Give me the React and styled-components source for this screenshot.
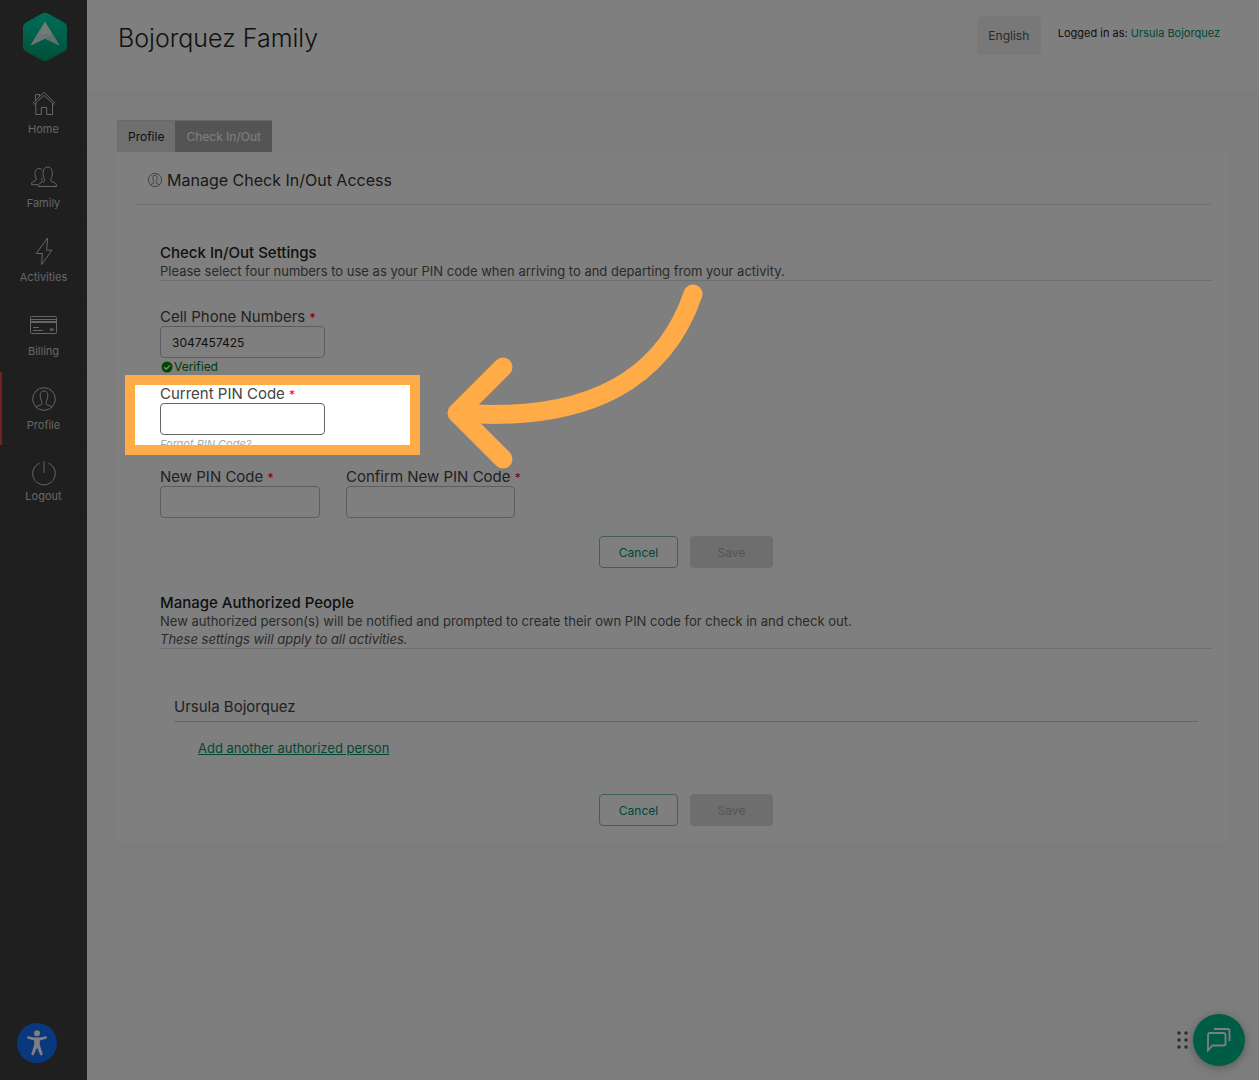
import React, { useState } from "react";
import styled, { createGlobalStyle } from "styled-components";

const HomeIcon = () => (
  <Icon width="24" height="24" viewBox="0 0 24 24">
    <path d="M3.5 10V3.5H7.5V6" />
    <path d="M0.8 12.4L12 1.2L23.2 12.4" />
    <path d="M1.8 13.6L12 4.4L22.2 13.6" />
    <path d="M3.8 12V23.5H9.3V16.5H14.7V23.5H20.5V12" />
  </Icon>
);

const FamilyIcon = () => (
  <Icon width="26" height="22" viewBox="0 0 26 22">
    <path d="M7.5 20.5C7.5 17 9.5 16.8 13 15.6C14.2 14.6 13.6 13 12.9 11.5C11.4 8.5 11.4 1 16.7 1C22 1 22 8.5 20.5 11.5C19.8 13 19.2 14.6 20.4 15.6C24 16.8 25.5 17 25.5 20.5Z" />
    <path d="M7 18.7H0.5C0.5 15.8 2 15.6 4.6 14.6C5.6 13.8 5.2 12.6 4.7 11.2C3.5 8.5 3.6 2.6 8 2.6C9.6 2.6 10.6 3.2 11.4 4.2" />
    <path d="M11.2 11.5C10.6 12.8 10.2 14 11.3 15" />
  </Icon>
);

const ActivitiesIcon = () => (
  <Icon width="18" height="28" viewBox="0 0 18 28">
    <path d="M12.6 1L1.3 16.5H7.4L6.6 27.5L17 13.2H11.6Z" />
  </Icon>
);

const BillingIcon = () => (
  <Icon width="27" height="18" viewBox="0 0 27 18">
    <rect x="0.5" y="0.5" width="26" height="17" rx="1" />
    <path d="M1 3.5H26M1 5.5H26M1 6.5H26M3 11.5H9M3 14.5H13" />
    <rect x="20.5" y="13" width="2.5" height="1.2" />
  </Icon>
);

const ProfileIcon = ({ size = 24 }) => (
  <Icon width={size} height={size} viewBox="0 0 24 24">
    <circle cx="12" cy="12" r="11.3" />
    <path d="M4 20C6 18.4 8 18.6 9.5 17.6C10.6 16.4 9.6 14.4 8.8 12.2C7.6 8 8 4 12 4C16 4 16.4 8 15.2 12.2C14.4 14.4 13.4 16.4 14.5 17.6C16 18.6 18 18.4 20 20" />
  </Icon>
);

const LogoutIcon = () => (
  <Icon width="24" height="26" viewBox="0 0 24 26">
    <path d="M12 1V13" />
    <path d="M7.5 3.2A11.3 11.3 0 1 0 16.5 3.2" />
  </Icon>
);

const navItems = [
  { label: "Home", icon: <HomeIcon /> },
  { label: "Family", icon: <FamilyIcon /> },
  { label: "Activities", icon: <ActivitiesIcon /> },
  { label: "Billing", icon: <BillingIcon /> },
  { label: "Profile", icon: <ProfileIcon />, active: true },
  { label: "Logout", icon: <LogoutIcon />, compact: true },
];

const Logo = () => (
  <svg width="44" height="50" viewBox="0 0 44 50" aria-hidden="true">
    <defs>
      <linearGradient id="logoFill" x1="0" y1="0" x2="0" y2="1">
        <stop offset="0" stopColor="#00d8b4" />
        <stop offset="0.5" stopColor="#00bf95" />
        <stop offset="1" stopColor="#009a70" />
      </linearGradient>
    </defs>
    <path
      d="M19 1.6Q22 0 25 1.6L41 10.4Q44 12 44 15V35Q44 38 41 39.6L25 48.4Q22 50 19 48.4L3 39.6Q0 38 0 35V15Q0 12 3 10.4Z"
      fill="url(#logoFill)"
    />
    <path d="M22 9.5L36.5 33.5L22 26.5L7.5 33.5Z" fill="#e8f4f0" />
    <path d="M22 26.5L36.5 33.5L29.5 22Z" fill="#c4dcd4" />
    <path d="M14.5 22L29.5 22L22 26.5L7.5 33.5Z" fill="#d6e8e2" />
  </svg>
);

const Field = ({
  id,
  label,
  value,
  onChange,
  type = "password",
  size,
  current,
}) => (
  <>
    <FieldLabel htmlFor={id}>
      {label} <Required>*</Required>
    </FieldLabel>
    <TextInput
      id={id}
      type={type}
      value={value}
      onChange={onChange}
      $size={size}
      $current={current}
    />
  </>
);

const FormActions = () => (
  <ButtonRow>
    <CancelButton type="button">Cancel</CancelButton>
    <SaveButton type="button" disabled>
      Save
    </SaveButton>
  </ButtonRow>
);

const App = () => {
  const [form, setForm] = useState({
    phone: "3047457425",
    currentPin: "",
    newPin: "",
    confirmPin: "",
  });

  const onFieldChange = (name) => (event) => {
    setForm({ ...form, [name]: event.target.value });
  };

  return (
    <Page>
      <GlobalStyle />
      <Sidebar>
        <LogoLink href="#" aria-label="Dashboard">
          <Logo />
        </LogoLink>
        {navItems.map((item) => (
          <NavItem
            key={item.label}
            href="#"
            $active={item.active}
            $compact={item.compact}
          >
            <NavIcon>{item.icon}</NavIcon>
            {item.label}
          </NavItem>
        ))}
      </Sidebar>

      <Main>
        <Header>
          <PageTitle>Bojorquez Family</PageTitle>
          <LanguageButton type="button">English</LanguageButton>
          <LoggedIn>
            Logged in as: <UserLink href="#">Ursula Bojorquez</UserLink>
          </LoggedIn>
        </Header>

        <Content>
          <Tabs>
            <Tab type="button">Profile</Tab>
            <Tab type="button" $active>
              Check In/Out
            </Tab>
          </Tabs>
          <Card>
            <CardHeading>
              <ProfileIcon size={14} />
              Manage Check In/Out Access
            </CardHeading>

            <Section>
              <SectionHeader>
                <SectionTitle>Check In/Out Settings</SectionTitle>
                <SectionText>
                  Please select four numbers to use as your PIN code when
                  arriving to and departing from your activity.
                </SectionText>
              </SectionHeader>

              <FieldGroup>
                <Field
                  id="phone"
                  type="tel"
                  label="Cell Phone Numbers"
                  size="165px"
                  value={form.phone}
                  onChange={onFieldChange("phone")}
                />
                <Verified>
                  <svg width="12" height="12" viewBox="0 0 12 12">
                    <circle cx="6" cy="6" r="5.5" fill="#008a00" />
                    <path
                      d="M3.2 6.2L5.2 8.2L9 4.2"
                      fill="none"
                      stroke="#fff"
                      strokeWidth="1.4"
                    />
                  </svg>
                  Verified
                </Verified>
              </FieldGroup>

              <HighlightedGroup>
                <Field
                  id="currentPin"
                  label="Current PIN Code"
                  size="165px"
                  current
                  value={form.currentPin}
                  onChange={onFieldChange("currentPin")}
                />
                <ForgotLink href="#">Forgot PIN Code?</ForgotLink>
                <Spotlight />
                <Arrow width="260" height="190" viewBox="0 0 260 190">
                  <path d="M248 12C219 97 144 141 14 131" />
                  <path d="M58 85L12 131L58 177" />
                </Arrow>
              </HighlightedGroup>

              <FieldRow>
                <FieldGroup>
                  <Field
                    id="newPin"
                    label="New PIN Code"
                    size="160px"
                    value={form.newPin}
                    onChange={onFieldChange("newPin")}
                  />
                </FieldGroup>
                <FieldGroup>
                  <Field
                    id="confirmPin"
                    label="Confirm New PIN Code"
                    size="169px"
                    value={form.confirmPin}
                    onChange={onFieldChange("confirmPin")}
                  />
                </FieldGroup>
              </FieldRow>
              <FormActions />
            </Section>

            <Section>
              <SectionHeader>
                <SectionTitle>Manage Authorized People</SectionTitle>
                <SectionText>
                  New authorized person(s) will be notified and prompted to
                  create their own PIN code for check in and check out.
                </SectionText>
                <SectionText $italic>
                  These settings will apply to all activities.
                </SectionText>
              </SectionHeader>
              <People>
                <PersonName>Ursula Bojorquez</PersonName>
                <AddLink href="#">Add another authorized person</AddLink>
              </People>
              <FormActions />
            </Section>
          </Card>
        </Content>
      </Main>

      <AccessibilityButton type="button" aria-label="Accessibility">
        <svg width="20" height="26" viewBox="0 0 20 26" fill="#fff">
          <circle cx="10" cy="3.2" r="3" />
          <path d="M1 6.2C0 6 -0.2 8.4 1 8.8L7.2 10.4V15L4.4 23.4C4 25.4 6.4 26 7 24.4L10 17.6L13 24.4C13.6 26 16 25.4 15.6 23.4L12.8 15V10.4L19 8.8C20.2 8.4 20 6 19 6.2C13 8 7 8 1 6.2Z" />
        </svg>
      </AccessibilityButton>

      <ChatWidget>
        <svg width="12" height="18" viewBox="0 0 12 18" fill="#555">
          {[2, 9, 16].map((y) => (
            <g key={y}>
              <circle cx="2" cy={y} r="1.7" />
              <circle cx="9" cy={y} r="1.7" />
            </g>
          ))}
        </svg>
        <ChatButton type="button" aria-label="Chat">
          <svg
            width="26"
            height="26"
            viewBox="0 0 26 26"
            fill="none"
            stroke="#fff"
            strokeWidth="1.8"
          >
            <path d="M2 23.5V8Q2 6 4 6H17.5Q19.5 6 19.5 8V16.5Q19.5 18.5 17.5 18.5H6.5Z" />
            <path d="M8 2H21.5Q23.5 2 23.5 4V14" />
          </svg>
        </ChatButton>
      </ChatWidget>
    </Page>
  );
};

export default App;

const GlobalStyle = createGlobalStyle`
  * {
    box-sizing: border-box;
  }

  body {
    margin: 0;
    background-color: #fafafa;
    font-family: Inter, sans-serif;
    font-size: 12px;
    line-height: 18px;
    color: #555;
  }

  button, input {
    font-family: inherit;
    font-size: inherit;
  }

  h1, h2, h3, h4, p {
    margin: 0;
    font-weight: 400;
  }
`;

const Icon = styled.svg`
  fill: none;
  stroke: currentColor;
  stroke-width: 1;
`;

const Page = styled.div`
  display: flex;
  min-height: 100vh;
`;

const Sidebar = styled.nav`
  width: 87px;
  flex-shrink: 0;
  background-color: #3e3e3e;
`;

const LogoLink = styled.a`
  display: flex;
  justify-content: center;
  padding: 12px 0 14px 3px;

  svg {
    display: block;
  }
`;

const NavItem = styled.a`
  display: flex;
  flex-direction: column;
  align-items: center;
  gap: ${(props) => (props.$compact ? "1px" : "4px")};
  height: 74px;
  padding-top: 13px;
  border-bottom: 1px solid #383838;
  box-shadow: ${(props) => (props.$active ? "inset 2px 0 #e8423f" : "none")};
  font-size: 11px;
  line-height: 16px;
  text-decoration: none;
  color: #ccc;
`;

const NavIcon = styled.span`
  display: flex;
  align-items: center;
  height: 28px;
`;

const Main = styled.main`
  flex: 1;
  min-width: 0;
`;

const Header = styled.header`
  display: flex;
  align-items: flex-start;
  height: 90px;
  padding: 16px 39px 0 31px;
  background-color: #fff;
`;

const PageTitle = styled.h1`
  margin-right: auto;
  font-size: 25px;
  font-weight: 300;
  line-height: 44px;
  color: #222;
`;

const LanguageButton = styled.button`
  height: 39px;
  width: 64px;
  padding: 0;
  border: none;
  border-radius: 5px;
  background-color: #f0f0f0;
  color: #555;
`;

const LoggedIn = styled.p`
  margin: 8px 0 0 17px;
  font-size: 11px;
  color: #222;
`;

const UserLink = styled.a`
  text-decoration: none;
  color: #00906c;
`;

const Content = styled.div`
  padding: 30px 29px 30px 30px;
`;

const Tabs = styled.div`
  display: flex;
`;

const Tab = styled.button`
  height: 32px;
  padding: 0 11px;
  border: none;
  border-top: 1px solid #d0d0d0;
  background-color: ${(props) => (props.$active ? "#a9a9a9" : "#dedede")};
  color: ${(props) => (props.$active ? "#fff" : "#222")};
`;

const Card = styled.section`
  padding: 0 18px 16px;
  background-color: #fff;
`;

const CardHeading = styled.h2`
  display: flex;
  align-items: center;
  gap: 5px;
  padding: 16px 13px 12px;
  border-bottom: 1px solid #e4e4e4;
  font-size: 16px;
  line-height: 24px;
  color: #333;
`;

const Section = styled.section`
  padding-left: 25px;

  & + & {
    margin-top: 26px;
  }

  ${CardHeading} + & {
    margin-top: 39px;
  }
`;

const SectionHeader = styled.div`
  border-bottom: 1px solid #ddd;
`;

const SectionTitle = styled.h3`
  font-size: 15px;
  font-weight: 500;
  color: #222;
`;

const SectionText = styled.p`
  font-size: 13px;
  font-style: ${(props) => (props.$italic ? "italic" : "normal")};
`;

const FieldGroup = styled.div`
  display: flex;
  flex-direction: column;
  align-items: flex-start;

  ${SectionHeader} + & {
    margin-top: 27px;
  }
`;

const HighlightedGroup = styled(FieldGroup)`
  position: relative;
  margin-top: 9px;
`;

const FieldRow = styled.div`
  display: flex;
  gap: 26px;
  margin-top: 15px;
`;

const FieldLabel = styled.label`
  font-size: 15px;
  white-space: nowrap;
  color: #444;
`;

const Required = styled.span`
  font-size: 12px;
  line-height: 12px;
  color: #f00;
`;

const TextInput = styled.input`
  width: ${(props) => props.$size};
  height: 32px;
  padding: 0 11px;
  border: 1px solid ${(props) => (props.$current ? "#666" : "#bbb")};
  border-radius: 4px;
  background-color: #fff;
  color: #222;
`;

const Verified = styled.span`
  display: flex;
  align-items: center;
  gap: 1px;
  padding-left: 1px;
  color: #007a00;
`;

const ForgotLink = styled.a`
  font-size: 11px;
  font-style: italic;
  text-decoration: none;
  color: #aaa;
`;

// dims everything outside the highlighted box
const Spotlight = styled.div`
  position: absolute;
  top: -10px;
  left: -35px;
  z-index: 10;
  width: 295px;
  height: 80px;
  border: 10px solid #ffab48;
  box-shadow: 0 0 0 5000px rgba(0, 0, 0, 0.5);
  pointer-events: none;
`;

const Arrow = styled.svg`
  position: absolute;
  top: -103px;
  left: 285px;
  z-index: 11;
  fill: none;
  stroke: #ffab48;
  stroke-width: 19;
  stroke-linecap: round;
  stroke-linejoin: round;
  pointer-events: none;
`;

const ButtonRow = styled.div`
  display: flex;
  justify-content: center;
  gap: 12px;
  margin-top: 18px;
`;

const CancelButton = styled.button`
  width: 79px;
  height: 32px;
  border: 1px solid #7cc4b0;
  border-radius: 4px;
  background-color: #fff;
  color: #00906c;
`;

const SaveButton = styled.button`
  width: 83px;
  height: 32px;
  border: none;
  border-radius: 4px;
  background-color: #dcdcdc;
  color: #aaa;
`;

const People = styled.div`
  padding: 49px 14px 19px;
`;

const PersonName = styled.h4`
  padding-bottom: 5px;
  border-bottom: 1px solid #ccc;
  font-size: 15px;
  color: #444;
`;

const AddLink = styled.a`
  display: block;
  width: fit-content;
  margin: 17px 0 0 24px;
  font-size: 13px;
  color: #00906c;
`;

const AccessibilityButton = styled.button`
  position: fixed;
  bottom: 17px;
  left: 17px;
  display: flex;
  align-items: center;
  justify-content: center;
  width: 40px;
  height: 40px;
  padding: 0;
  border: none;
  border-radius: 50%;
  background-color: #1270ff;
`;

const ChatWidget = styled.div`
  position: fixed;
  right: 14px;
  bottom: 14px;
  display: flex;
  align-items: center;
  gap: 4px;
`;

const ChatButton = styled.button`
  display: flex;
  align-items: center;
  justify-content: center;
  width: 52px;
  height: 52px;
  padding: 0;
  border: none;
  border-radius: 50%;
  background-color: #00bb8a;
  box-shadow: 0 2px 8px rgba(0, 0, 0, 0.3);
`;
